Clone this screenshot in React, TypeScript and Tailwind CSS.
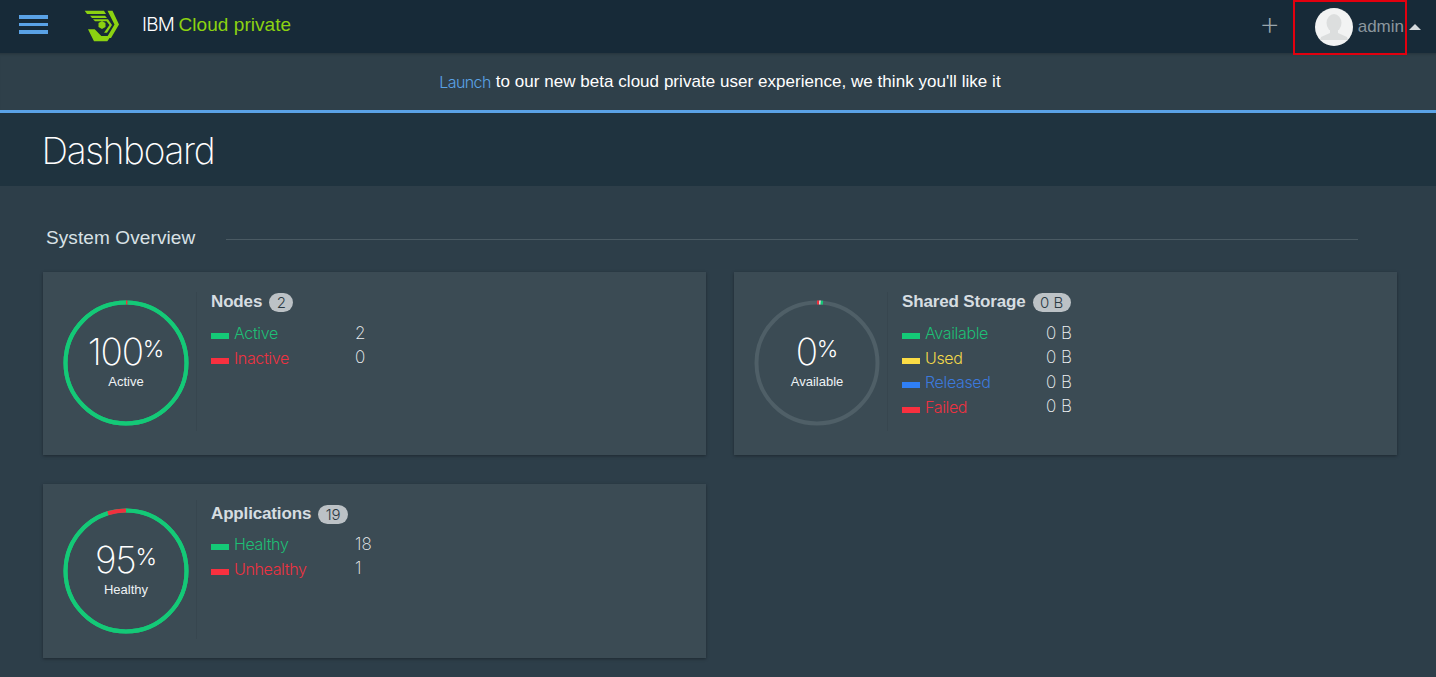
import { FC } from "react";

const sans = "font-['Liberation_Sans',Arial,sans-serif]";
const light = "font-['Inter',sans-serif] font-light";
const thin = "font-['Inter',sans-serif] font-extralight";

interface Segment {
    color: string;
    from: number;
    to: number;
}

interface LegendRow {
    label: string;
    value: string;
    text: string;
    swatch: string;
}

interface StatCardProps {
    title: string;
    badge: string;
    percent: string;
    caption: string;
    track: string;
    segments: Segment[];
    rows: LegendRow[];
    height: string;
    top: string;
    titleOffset: string;
    rowsOffset: string;
}

const Ring: FC<{ track: string; segments: Segment[] }> = ({ track, segments }) => {
    const r = 60.5;
    const c = 2 * Math.PI * r;
    return (
        <svg width="126" height="126" viewBox="0 0 126 126" className="[grid-area:1/1]">
            <circle cx="63" cy="63" r={r} fill="none" stroke={track} strokeWidth="4" />
            {segments.map((s) => (
                <circle
                    key={s.color + s.from}
                    cx="63"
                    cy="63"
                    r={r}
                    fill="none"
                    stroke={s.color}
                    strokeWidth="4"
                    strokeDasharray={`${(s.to - s.from) * c} ${c}`}
                    strokeDashoffset={-s.from * c}
                    transform="rotate(-90 63 63)"
                />
            ))}
        </svg>
    );
};

const StatCard: FC<StatCardProps> = ({
    title,
    badge,
    percent,
    caption,
    track,
    segments,
    rows,
    height,
    top,
    titleOffset,
    rowsOffset,
}) => (
    <div className={`flex bg-[#3b4b54] shadow-[0_1px_3px_rgba(0,0,0,0.35)] pl-5 ${height} ${top}`}>
        <div className="grid w-[126px] h-[126px] place-items-center">
            <Ring track={track} segments={segments} />
            <div className="[grid-area:1/1] flex flex-col items-center -mt-[7px]">
                <div className={`${thin} text-white text-[37px] leading-[40px] tracking-[-1.2px]`}>
                    {percent}
                    <span className={`${light} text-[23px] align-[8px] tracking-normal`}>%</span>
                </div>
                <div className={`${sans} text-[#eef2f4] text-[13px] leading-[16px] mt-[2px]`}>{caption}</div>
            </div>
        </div>
        <div className="ml-[7px] w-px h-[139px] -mt-[8px] bg-[#37464f]" />
        <div className={`ml-[14px] ${titleOffset}`}>
            <div className="flex items-center h-[20px]">
                <span className={`${sans} font-bold text-[17px] tracking-[-0.15px] text-[#d6dde1]`}>{title}</span>
                <span className={`${light} ml-[7px] h-[19px] px-[7.5px] rounded-full bg-[#bcc2c6] text-[#2b3a43] text-[15px] leading-[19px]`}>
                    {badge}
                </span>
            </div>
            <div className={rowsOffset}>
                {rows.map((row) => (
                    <div key={row.label} className="flex items-center h-[24.6px]">
                        <span className={`w-[18px] h-[6px] mt-[6px] ${row.swatch}`} />
                        <span className={`${light} ml-[5px] w-[121px] text-[16px] tracking-[-0.35px] ${row.text}`}>{row.label}</span>
                        <span className={`${thin} text-[17px] text-[#eef1f3]`}>{row.value}</span>
                    </div>
                ))}
            </div>
        </div>
    </div>
);

const Logo: FC = () => (
    <svg width="36" height="32" viewBox="0 0 36 32" fill="#8cd211">
        <path d="M0.7 0.7H20L22 4H3z" />
        <path d="M6 5.8H21L23 8H8z" />
        <path d="M23.5 0.7H28.5L35 14.5L27 28H22.5L30.5 14.5z" />
        <path d="M9 9.3H24L28 15L23 22.7H20L25.5 15L22.5 11.2H11z" />
        <path d="M18 11L21.5 13V17L18 19L14.5 17V13z" />
        <path d="M4 19.3H10.7L17.3 26H27L23.3 31.3H10z" />
    </svg>
);

const Avatar: FC = () => (
    <svg width="38" height="38" viewBox="0 0 38 38">
        <defs>
            <clipPath id="avatar-clip">
                <circle cx="19" cy="19" r="19" />
            </clipPath>
        </defs>
        <circle cx="19" cy="19" r="19" fill="#f2f3f3" />
        <g clipPath="url(#avatar-clip)" fill="#dcdede">
            <ellipse cx="19" cy="15" rx="7.5" ry="9" />
            <path d="M15 21h8v4l9 4 1 3H5l1-3 9-4z" />
        </g>
    </svg>
);

export default function App() {
    return (
        <div className={`relative w-[1436px] h-[677px] overflow-hidden bg-[#2d3e49] ${sans}`}>
            {/* Top bar */}
            <header className="flex items-center h-[53px] bg-[#172a38] pl-[19px]">
                <div className="flex flex-col gap-[4px] w-[29px] -mt-[4px]">
                    <span className="h-[3.5px] bg-[#5aa2e6]" />
                    <span className="h-[3.5px] bg-[#5aa2e6]" />
                    <span className="h-[3.5px] bg-[#5aa2e6]" />
                </div>
                <div className="ml-[36px] -mt-[1px]">
                    <Logo />
                </div>
                <div className="ml-[22px] -mt-[3px] text-[19px] tracking-[0.05px] whitespace-nowrap">
                    <span className={`${light} text-white tracking-[-0.8px]`}>IBM </span>
                    <span className="text-[#8cd211]">Cloud private</span>
                </div>
                <div className="ml-auto flex items-center">
                    <span className={`${thin} text-[#9aa5ab] text-[34px] leading-none -mt-[8px]`}>+</span>
                    <div className="ml-[34px]">
                        <Avatar />
                    </div>
                    <span className="ml-[5px] text-[17px] text-[#8b979e]">admin</span>
                    <span className="ml-[5px] mr-[15px] w-0 h-0 border-x-[6px] border-x-transparent border-b-[6px] border-b-[#d5dadd]" />
                </div>
            </header>

            {/* Beta banner */}
            <div className="flex items-center justify-center h-[57px] pl-[4px] bg-[#2f404a] whitespace-nowrap shadow-[inset_0_3px_3px_-2px_rgba(0,0,0,0.2)]">
                <span className={`${light} text-[16px] text-[#5aa2e6] tracking-[-0.6px]`}>Launch</span>
                <span className="ml-[5px] text-[17px] text-white tracking-[0.04px]">to our new beta cloud private user experience, we think you'll like it</span>
            </div>
            <div className="h-[3px] bg-[#5aa2e6]" />

            {/* Title */}
            <div className="flex items-center h-[73px] bg-[#1f333f] pl-[41.5px]">
                <h1 className={`${thin} text-white text-[37px] tracking-[-1.3px] mt-[3px]`}>Dashboard</h1>
            </div>

            {/* Content */}
            <main className="pl-[43px] pr-[39px]">
                <div className="flex items-center mt-[40px] h-[24px] pl-[3px]">
                    <h2 className="text-[19px] tracking-[0.1px] text-[#d9e2e6] whitespace-nowrap">System Overview</h2>
                    <div className="ml-[31px] mr-[39px] mt-[3px] flex-1 h-px bg-[#4a5a63]" />
                </div>
                <div className="grid grid-cols-2 gap-x-[28px] gap-y-[29px] mt-[22px]">
                    <StatCard
                        title="Nodes"
                        badge="2"
                        percent="100"
                        caption="Active"
                        track="#14c977"
                        segments={[
                            { color: "#14c977", from: 0.004, to: 1 },
                            { color: "#f0303e", from: 0, to: 0.004 },
                        ]}
                        rows={[
                            { label: "Active", value: "2", text: "text-[#1dbf75]", swatch: "bg-[#14c977]" },
                            { label: "Inactive", value: "0", text: "text-[#ee3140]", swatch: "bg-[#f8303f]" },
                        ]}
                        height="h-[183px]"
                        top="pt-[28px]"
                        titleOffset="-mt-[8px]"
                        rowsOffset="mt-[9px]"
                    />
                    <StatCard
                        title="Shared Storage"
                        badge="0 B"
                        percent="0"
                        caption="Available"
                        track="#4f5f67"
                        segments={[
                            { color: "#f0303e", from: 0, to: 0.006 },
                            { color: "#f5f5f5", from: 0.006, to: 0.01 },
                            { color: "#14c977", from: 0.01, to: 0.016 },
                        ]}
                        rows={[
                            { label: "Available", value: "0 B", text: "text-[#1dbf75]", swatch: "bg-[#14c977]" },
                            { label: "Used", value: "0 B", text: "text-[#f2d94a]", swatch: "bg-[#fbdc45]" },
                            { label: "Released", value: "0 B", text: "text-[#3b79dc]", swatch: "bg-[#2f7ff5]" },
                            { label: "Failed", value: "0 B", text: "text-[#ee3140]", swatch: "bg-[#f8303f]" },
                        ]}
                        height="h-[183px]"
                        top="pt-[28px]"
                        titleOffset="-mt-[8px]"
                        rowsOffset="mt-[9px]"
                    />
                    <StatCard
                        title="Applications"
                        badge="19"
                        percent="95"
                        caption="Healthy"
                        track="#14c977"
                        segments={[
                            { color: "#14c977", from: 0, to: 0.95 },
                            { color: "#f0303e", from: 0.95, to: 1 },
                        ]}
                        rows={[
                            { label: "Healthy", value: "18", text: "text-[#1dbf75]", swatch: "bg-[#14c977]" },
                            { label: "Unhealthy", value: "1", text: "text-[#ee3140]", swatch: "bg-[#f8303f]" },
                        ]}
                        height="h-[174px]"
                        top="pt-[24px]"
                        titleOffset="-mt-[4px]"
                        rowsOffset="mt-[8px]"
                    />
                </div>
            </main>

            {/* Red annotation box from the screenshot */}
            <div className="absolute left-[1293px] top-0 w-[114px] h-[55px] border-2 border-[#e3000f]" />
        </div>
    );
}
